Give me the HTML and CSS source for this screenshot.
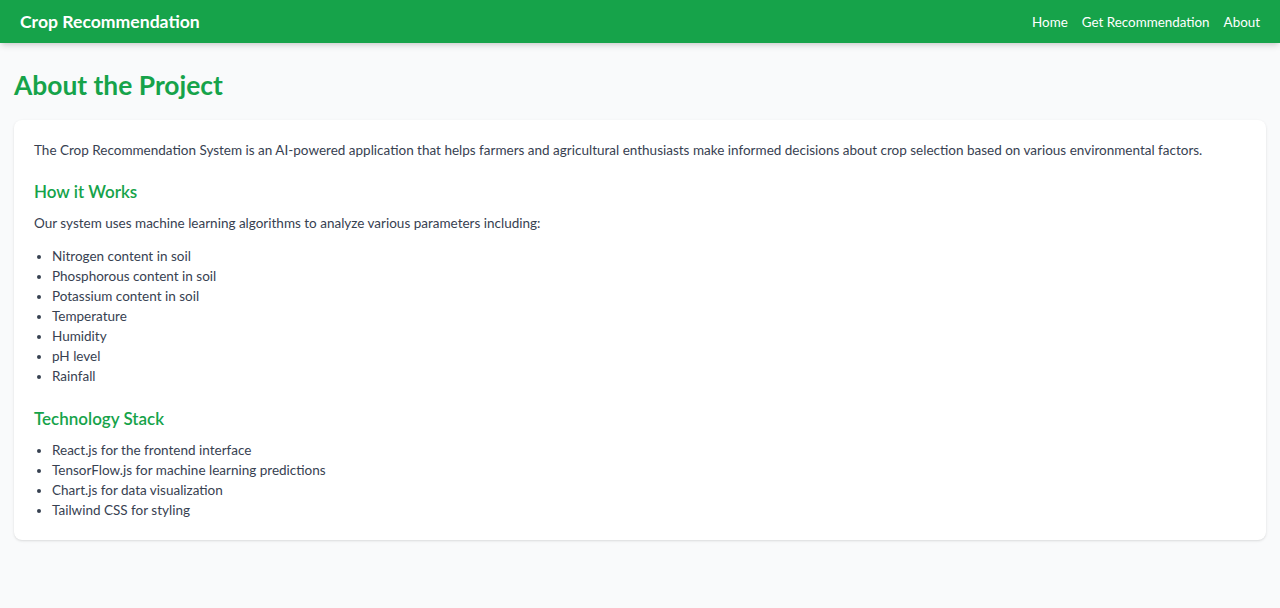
FILE: index.html
```html
<!DOCTYPE html>
<html lang="en">
<head>
<meta charset="utf-8">
<title>Crop Recommendation</title>
<link rel="stylesheet" href="styles.css">
</head>
<body>
<header class="topbar">
  <div class="brand">Crop Recommendation</div>
  <nav class="nav">
    <a href="#">Home</a>
    <a href="#">Get Recommendation</a>
    <a href="#">About</a>
  </nav>
</header>
<main class="main">
  <h1 class="page-title">About the Project</h1>
  <section class="card">
    <p class="text">The Crop Recommendation System is an AI-powered application that helps farmers and agricultural enthusiasts make informed decisions about crop selection based on various environmental factors.</p>
    <h2 class="section-title">How it Works</h2>
    <p class="text">Our system uses machine learning algorithms to analyze various parameters including:</p>
    <ul class="list">
      <li>Nitrogen content in soil</li>
      <li>Phosphorous content in soil</li>
      <li>Potassium content in soil</li>
      <li>Temperature</li>
      <li>Humidity</li>
      <li>pH level</li>
      <li>Rainfall</li>
    </ul>
    <h2 class="section-title">Technology Stack</h2>
    <ul class="list">
      <li>React.js for the frontend interface</li>
      <li>TensorFlow.js for machine learning predictions</li>
      <li>Chart.js for data visualization</li>
      <li>Tailwind CSS for styling</li>
    </ul>
  </section>
</main>
</body>
</html>
```
FILE: styles.css
```css
* { box-sizing: border-box; }
html, body {
  margin: 0;
  padding: 0;
}
body {
  background: #f9fafb;
  font-family: "Lato", "Noto Sans", sans-serif;
  color: #374151;
  min-height: 608px;
}
.topbar {
  height: 43px;
  background: #16a34a;
  display: flex;
  align-items: center;
  justify-content: space-between;
  padding: 0 20px;
  box-shadow: 0 4px 6px -1px rgba(0,0,0,0.12), 0 2px 4px -2px rgba(0,0,0,0.1);
}
.brand {
  color: #fff;
  font-weight: 700;
  font-size: 17.6px;
}
.nav {
  display: flex;
  gap: 14px;
}
.nav a {
  color: #fff;
  text-decoration: none;
  font-size: 13.4px;
}
.main {
  padding: 26px 14px;
}
.page-title {
  margin: 0 0 19px;
  font-size: 26.4px;
  line-height: 32px;
  color: #16a34a;
  font-weight: 700;
}
.card {
  display: flex;
  flex-direction: column;
  background: #fff;
  border-radius: 8px;
  padding: 20px;
  box-shadow: 0 1px 3px rgba(0,0,0,0.1), 0 1px 2px -1px rgba(0,0,0,0.1);
}
.text {
  margin: 0 0 13px;
  font-size: 13.5px;
  line-height: 20px;
}
.section-title {
  margin: 7px 0 9px;
  font-size: 17px;
  line-height: 24px;
  font-weight: 600;
  color: #16a34a;
}
.list {
  margin: 0 0 14px;
  padding-left: 18px;
  font-size: 13.5px;
  line-height: 20px;
}
.list li::marker { font-size: 12px; }
.list:last-child { margin-bottom: 0; }
```
